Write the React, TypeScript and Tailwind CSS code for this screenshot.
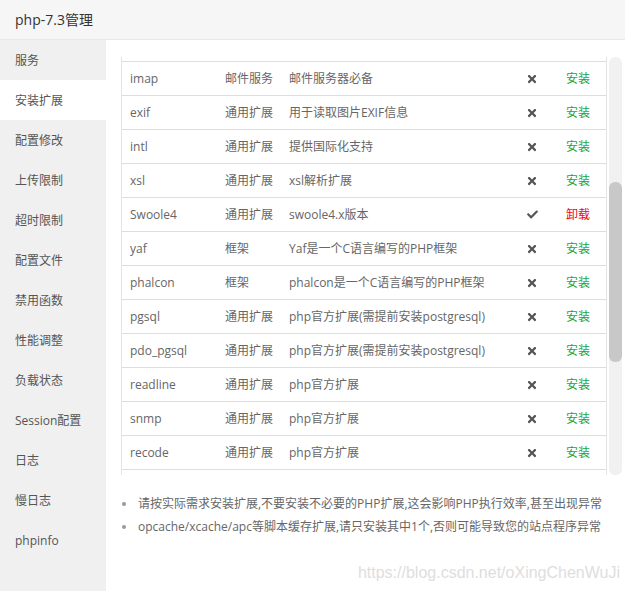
import React from "react"
import { FaTimes, FaCheck } from "react-icons/fa"

type Ext = {
    name: string
    type: string
    desc: string
    installed?: boolean
}

const menu = [
    "服务",
    "安装扩展",
    "配置修改",
    "上传限制",
    "超时限制",
    "配置文件",
    "禁用函数",
    "性能调整",
    "负载状态",
    "Session配置",
    "日志",
    "慢日志",
    "phpinfo",
]

const exts: Ext[] = [
    { name: "imap", type: "邮件服务", desc: "邮件服务器必备" },
    { name: "exif", type: "通用扩展", desc: "用于读取图片EXIF信息" },
    { name: "intl", type: "通用扩展", desc: "提供国际化支持" },
    { name: "xsl", type: "通用扩展", desc: "xsl解析扩展" },
    { name: "Swoole4", type: "通用扩展", desc: "swoole4.x版本", installed: true },
    { name: "yaf", type: "框架", desc: "Yaf是一个C语言编写的PHP框架" },
    { name: "phalcon", type: "框架", desc: "phalcon是一个C语言编写的PHP框架" },
    { name: "pgsql", type: "通用扩展", desc: "php官方扩展(需提前安装postgresql)" },
    { name: "pdo_pgsql", type: "通用扩展", desc: "php官方扩展(需提前安装postgresql)" },
    { name: "readline", type: "通用扩展", desc: "php官方扩展" },
    { name: "snmp", type: "通用扩展", desc: "php官方扩展" },
    { name: "recode", type: "通用扩展", desc: "php官方扩展" },
]

const notes = [
    "请按实际需求安装扩展,不要安装不必要的PHP扩展,这会影响PHP执行效率,甚至出现异常",
    "opcache/xcache/apc等脚本缓存扩展,请只安装其中1个,否则可能导致您的站点程序异常",
]

const font = "font-['Open_Sans','Noto_Sans_CJK_SC',sans-serif]"

const App = () => {
    return (
        <div className={`w-[625px] h-[591px] bg-white flex flex-col overflow-hidden ${font}`}>
            <div className="h-[40px] shrink-0 bg-[#f6f6f6] border-b border-[#e8e8e8] pl-[15px] flex items-center text-[14px] text-[#333]">
                php-7.3管理
            </div>

            <div className="flex flex-1 min-h-0">
                <div className="w-[106px] shrink-0 bg-[#f0f0f0] flex flex-col">
                    {menu.map((m, i) => (
                        <div
                            key={m}
                            className={`h-[40px] pl-[15px] pt-[2px] flex items-center text-[12px] text-[#555] ${
                                i === 1 ? "bg-white" : ""
                            }`}
                        >
                            {m}
                        </div>
                    ))}
                </div>

                <div className="flex-1 flex flex-col pl-[15px] pr-[3px] pt-[17px]">
                    <div className="flex h-[418px] overflow-hidden">
                        <div className="flex-1 border-l border-r border-[#e4e4e4] flex flex-col">
                            <div className="h-[5px] shrink-0 border-b border-[#ddd]" />
                            {exts.map((e) => (
                                <div
                                    key={e.name}
                                    className="h-[34px] shrink-0 border-b border-[#ddd] flex items-center text-[12px] text-[#666]"
                                >
                                    <span className="w-[103px] pl-[8px] shrink-0">{e.name}</span>
                                    <span className="w-[64px] shrink-0">{e.type}</span>
                                    <span className="flex-1">{e.desc}</span>
                                    <span className="w-[20px] shrink-0 flex justify-center text-[#555]">
                                        {e.installed ? <FaCheck size={11} /> : <FaTimes size={12} />}
                                    </span>
                                    <span
                                        className={`w-[64px] shrink-0 pl-[24px] ${
                                            e.installed ? "text-[#ef0808]" : "text-[#20a53a]"
                                        }`}
                                    >
                                        {e.installed ? "卸载" : "安装"}
                                    </span>
                                </div>
                            ))}
                        </div>
                        <div className="w-[15px] shrink-0 pl-[2px] flex flex-col">
                            <div className="flex-1 bg-[#f1f1f1] rounded-[6px] flex flex-col">
                                <div className="h-[125px] shrink-0" />
                                <div className="h-[180px] shrink-0 bg-[#c8c8c8] rounded-[6px]" />
                            </div>
                        </div>
                    </div>

                    <ul className="mt-[17px] text-[12px] text-[#666] leading-[23px]">
                        {notes.map((n) => (
                            <li key={n} className="flex items-center">
                                <span className="w-[17px] shrink-0 pl-[1px] flex">
                                    <span className="w-[4px] h-[4px] rounded-full bg-[#999]" />
                                </span>
                                {n}
                            </li>
                        ))}
                    </ul>

                    <div className="mt-auto self-end pb-[6px] pr-[2px] font-['Liberation_Sans',sans-serif] text-[16px] text-[#dedede]">
                        https://blog.csdn.net/oXingChenWuJi
                    </div>
                </div>
            </div>
        </div>
    )
}

export default App
